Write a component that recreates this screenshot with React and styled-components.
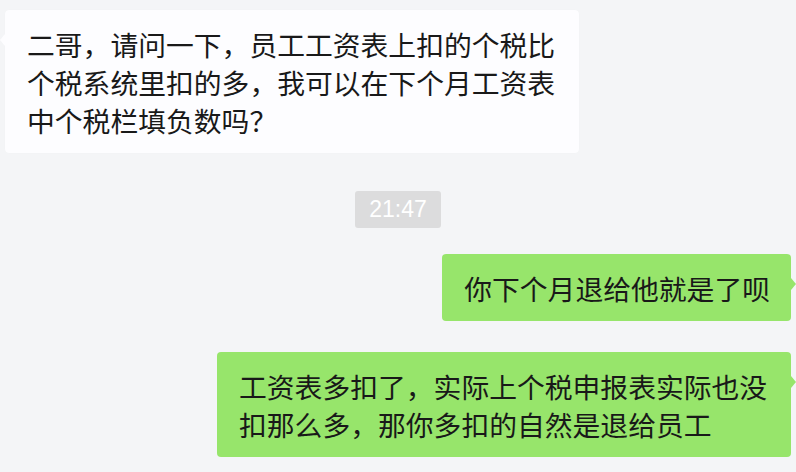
import React from 'react'
import styled, { createGlobalStyle } from 'styled-components'

const GlobalStyle = createGlobalStyle`
    html, body {
        margin: 0;
        padding: 0;
        background: #f4f5f7;
    }
    * {
        box-sizing: border-box;
    }
`

const messages = [
    { id: 1, type: 'in', text: '二哥，请问一下，员工工资表上扣的个税比个税系统里扣的多，我可以在下个月工资表中个税栏填负数吗？' },
    { id: 2, type: 'time', text: '21:47' },
    { id: 3, type: 'out', text: '你下个月退给他就是了呗', gap: 26 },
    { id: 4, type: 'out', text: '工资表多扣了，实际上个税申报表实际也没扣那么多，那你多扣的自然是退给员工', gap: 31 },
]

const App = () => {
    return (
        <>
            <GlobalStyle />
            <Chat>
                {messages.map((m) =>
                    m.type === 'time' ? (
                        <TimeRow key={m.id}>
                            <TimeTag>{m.text}</TimeTag>
                        </TimeRow>
                    ) : (
                        <Row key={m.id} mine={m.type === 'out' ? 1 : 0} gap={m.gap || 0}>
                            <Bubble mine={m.type === 'out' ? 1 : 0}>{m.text}</Bubble>
                        </Row>
                    )
                )}
            </Chat>
        </>
    )
}

export default App

const Chat = styled.div`
    width: 796px;
    height: 472px;
    padding: 10px 5px 0 5px;
    display: flex;
    flex-direction: column;
    background: #f4f5f7;
    overflow: hidden;
    font-family: "Noto Sans CJK SC", "Noto Sans", sans-serif;
`

const Row = styled.div`
    display: flex;
    justify-content: ${({ mine }) => (mine ? 'flex-end' : 'flex-start')};
    margin-top: ${({ gap }) => gap}px;
`

const Bubble = styled.div`
    position: relative;
    max-width: 574px;
    padding: 15px 21px 14px 22px;
    font-size: 27.8px;
    line-height: 38px;
    color: #191919;
    border-radius: 4px;
    background: ${({ mine }) => (mine ? '#97e56b' : '#fdfdff')};
    box-shadow: ${({ mine }) => (mine ? 'none' : '0 0 1px rgba(0, 0, 0, 0.04)')};

    &::before {
        content: '';
        position: absolute;
        top: 24px;
        ${({ mine }) => (mine ? 'right: -5px;' : 'left: -5px;')}
        border-top: 6px solid transparent;
        border-bottom: 6px solid transparent;
        ${({ mine }) =>
            mine
                ? 'border-left: 5px solid #97e56b;'
                : 'border-right: 5px solid #fdfdff;'}
    }
`

const TimeRow = styled.div`
    display: flex;
    justify-content: center;
    margin-top: 38px;
`

const TimeTag = styled.div`
    height: 37px;
    padding: 0 14px;
    display: flex;
    align-items: center;
    background: #dcdcdd;
    color: #ffffff;
    font-family: "Liberation Sans", Arial, sans-serif;
    font-size: 23px;
    border-radius: 3px;
`
